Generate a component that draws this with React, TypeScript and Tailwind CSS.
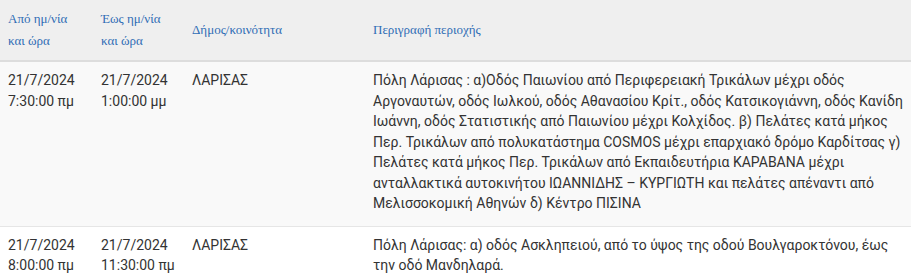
import React from "react";

const rows = [
  {
    from: ["21/7/2024", "7:30:00 πμ"],
    to: ["21/7/2024", "1:00:00 μμ"],
    area: "ΛΑΡΙΣΑΣ",
    desc:
      "Πόλη Λάρισας : α)Οδός Παιωνίου από Περιφερειακή Τρικάλων μέχρι οδός Αργοναυτών, οδός Ιωλκού, οδός Αθανασίου Κρίτ., οδός Κατσικογιάννη, οδός Κανίδη Ιωάννη, οδός Στατιστικής από Παιωνίου μέχρι Κολχίδος. β) Πελάτες κατά μήκος Περ. Τρικάλων από πολυκατάστημα COSMOS μέχρι επαρχιακό δρόμο Καρδίτσας γ) Πελάτες κατά μήκος Περ. Τρικάλων από Εκπαιδευτήρια ΚΑΡΑΒΑΝΑ μέχρι ανταλλακτικά αυτοκινήτου ΙΩΑΝΝΙΔΗΣ – ΚΥΡΓΙΩΤΗ και πελάτες απέναντι από Μελισσοκομική Αθηνών δ) Κέντρο ΠΙΣΙΝΑ",
    bg: "bg-[#f9f9f9]",
  },
  {
    from: ["21/7/2024", "8:00:00 πμ"],
    to: ["21/7/2024", "11:30:00 πμ"],
    area: "ΛΑΡΙΣΑΣ",
    desc:
      "Πόλη Λάρισας: α) οδός Ασκληπειού, από το ύψος της οδού Βουλγαροκτόνου, έως την οδό Μανδηλαρά.",
    bg: "bg-white",
  },
];

export default function App() {
  return (
    <div className="w-[911px] h-[273px] overflow-hidden bg-white">
      <table className="w-full border-collapse table-fixed">
        <colgroup>
          <col className="w-[93px]" />
          <col className="w-[91px]" />
          <col className="w-[181px]" />
          <col />
        </colgroup>
        <thead>
          <tr className="bg-[#efefef] border-b-2 border-[#dddddd] h-[57px]">
            {["Από ημ/νία και ώρα", "Έως ημ/νία και ώρα", "Δήμος/κοινότητα", "Περιγραφή περιοχής"].map((h, i) => (
              <th
                key={i}
                className="text-left font-normal align-middle px-2 py-2 text-[13px] leading-[22px] text-[#2f6db5] [font-family:'Liberation_Serif',serif]"
              >
                {h}
              </th>
            ))}
          </tr>
        </thead>
        <tbody className="text-[14px] leading-[20.5px] text-[#333333] [font-family:Roboto,sans-serif]">
          {rows.map((r, i) => (
            <tr key={i} className={`${r.bg} border-b border-[#e6e6e6]`}>
              <td className="align-top px-2 pt-[8px] pb-[12px]">
                {r.from[0]}
                <br />
                {r.from[1]}
              </td>
              <td className="align-top px-2 pt-[8px] pb-[12px]">
                {r.to[0]}
                <br />
                {r.to[1]}
              </td>
              <td className="align-top px-2 pt-[8px] pb-[12px]">{r.area}</td>
              <td className="align-top pl-2 pr-1 pt-[8px] pb-[12px]">{r.desc}</td>
            </tr>
          ))}
        </tbody>
      </table>
    </div>
  );
}
